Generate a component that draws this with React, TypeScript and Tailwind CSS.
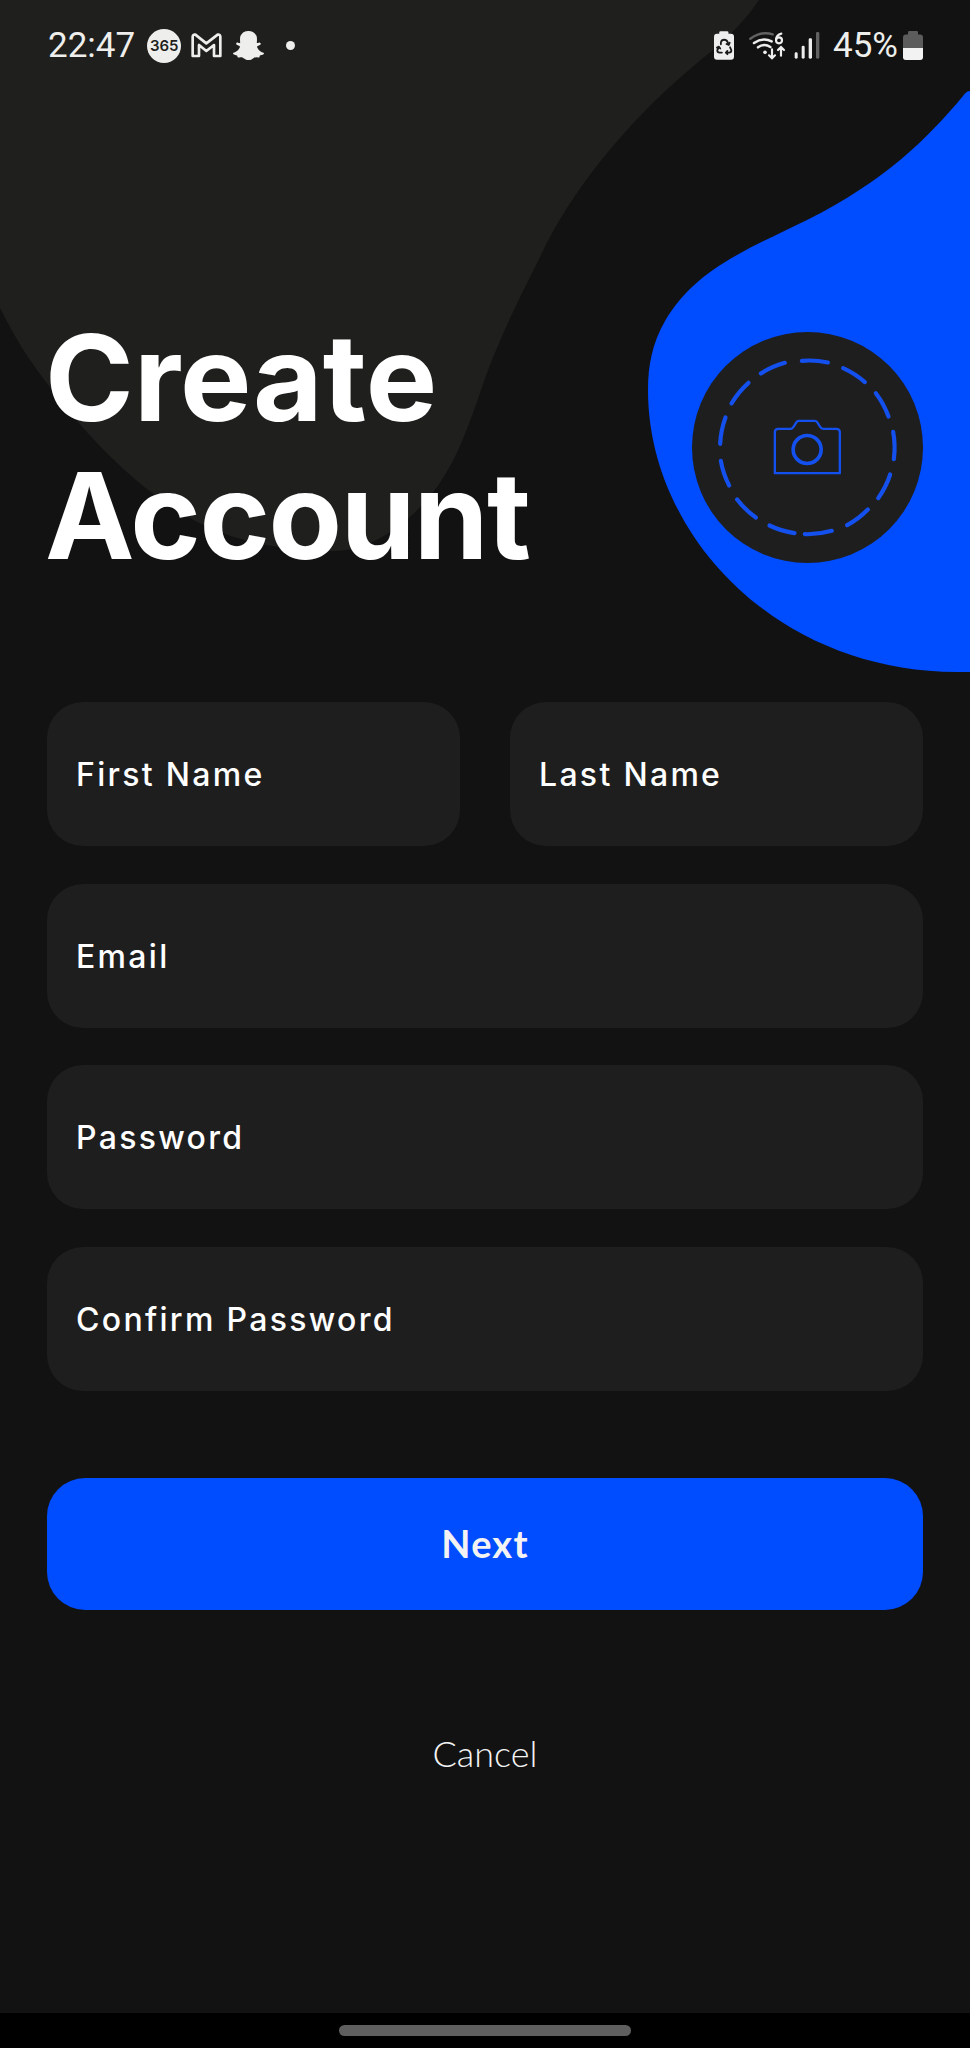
import React from "react";
import { FaSnapchatGhost } from "react-icons/fa";

function Backdrop() {
  return (
    <svg className="absolute inset-0 h-[700px] w-[970px]" viewBox="0 0 970 700" aria-hidden="true">
      <path
        d="M0 0H759C747 18 730 36 713 50C683 74 654 100 627 130C589 172 560 214 540 257C519 299 502 333 487 373C473 412 461 454 437 487C414 519 374 551 334 551C285 551 232 542 190 518C125 481 73 421 30 360C19 344 9 326 0 308Z"
        fill="#1f1f1d"
      />
      <path
        d="M970 91C967 91 965 93 963 96C928 138 885 181 807 220C783 232 760 242 737 255C703 274 681 294 665 321C652 344 648 366 648 390C648 535 777 672 957 672H970Z"
        fill="#004cff"
      />
    </svg>
  );
}

function GmailIcon() {
  return (
    <svg className="ml-[10px] h-[25px] w-[31px]" viewBox="482 56 93 75" fill="none" stroke="#eeeeec" strokeWidth="8" strokeLinejoin="round">
      <path d="M487 125V67Q487 60 495 61L528 87L562 61Q570 60 570 67V125H551V92L528 110L506 92V125Z" />
    </svg>
  );
}

function BatterySaver() {
  return (
    <svg className="h-[29px] w-[20px]" viewBox="704 94 61 87">
      <rect x="720" y="94" width="28" height="20" rx="4" fill="#eeeeee" />
      <rect x="704" y="102" width="61" height="79" rx="9" fill="#eeeeee" />
      <g fill="none" stroke="#1a1a1a" strokeWidth="5.5" strokeLinecap="round" strokeLinejoin="round">
        <path d="M725 134V128Q727 120 735 120Q743 120 746 128L749 135M742 133L749 136L752 129" />
        <path d="M719 142L714 152Q714 159 721 159H728M713 144L719 141L723 147" />
        <path d="M753 143L757 152Q757 159 750 159H742M745 154L740 159L745 164" />
      </g>
    </svg>
  );
}

function WifiIcon() {
  return (
    <svg className="ml-[15px] h-[29px] w-[37px]" viewBox="178 48 111 87" fill="none" strokeWidth="7.5" strokeLinecap="round">
      <path d="M182 71Q215 47 249 58" stroke="#626262" />
      <path d="M193 84Q219 66 246 79M205 97Q224 84 242 96" stroke="#eeeeee" />
      <circle cx="226" cy="112" r="5.5" fill="#eeeeee" />
      <path d="M247 103V129M238 121L247 130L256 121M274 122V97M265 105L274 96L283 105" stroke="#eeeeee" strokeWidth="6.5" />
      <path d="M275 56Q260 59 259 75" stroke="#eeeeee" strokeWidth="6.5" />
      <circle cx="268" cy="76" r="9" stroke="#eeeeee" strokeWidth="6.5" />
    </svg>
  );
}

function SignalIcon() {
  return (
    <svg className="ml-[8px] h-[27px] w-[26px]" viewBox="311 51 78 81">
      <rect x="313" y="112" width="9" height="19" rx="4" fill="#eeeeee" />
      <rect x="334" y="92" width="9" height="39" rx="4" fill="#eeeeee" />
      <rect x="355" y="70" width="10" height="61" rx="4" fill="#eeeeee" />
      <rect x="377" y="51" width="10" height="80" rx="4" fill="#626262" />
    </svg>
  );
}

function BatteryIcon() {
  return (
    <svg className="ml-[5px] h-[29px] w-[20px]" viewBox="0 0 20 29">
      <rect x="5" y="0" width="10" height="6" rx="1.2" fill="#5c5c5c" />
      <rect x="0" y="3.5" width="20" height="25.5" rx="3" fill="#5c5c5c" />
      <path d="M0 17H20V26Q20 29 17 29H3Q0 29 0 26Z" fill="#f2f2f2" />
    </svg>
  );
}

function StatusBar() {
  return (
    <header className="relative flex h-[91px] items-center justify-between pr-[47px] pl-[48px] font-['Roboto',sans-serif] text-[35px] leading-none text-[#eeeeec]">
      <div className="flex items-center">
        <span>22:47</span>
        <span className="ml-[12px] flex size-[34px] items-center justify-center rounded-full bg-[#eeeeec] font-['Inter',sans-serif] text-[15px] font-semibold text-[#1f1f1d]">365</span>
        <GmailIcon />
        <FaSnapchatGhost className="ml-[11px] size-[31px]" />
        <span className="ml-[22px] size-[9px] rounded-full bg-[#eeeeec]" />
      </div>
      <div className="flex items-center">
        <BatterySaver />
        <WifiIcon />
        <SignalIcon />
        <span className="ml-[13px]">45%</span>
        <BatteryIcon />
      </div>
    </header>
  );
}

const dashes = [
  "M486 213A260 260 0 0 1 564 218",
  "M610 235A260 260 0 0 1 675 277",
  "M708 310A260 260 0 0 1 746 380",
  "M760 426A260 260 0 0 1 762 508",
  "M751 554A260 260 0 0 1 715 625",
  "M684 659A260 260 0 0 1 622 706",
  "M576 723A260 260 0 0 1 495 733",
  "M464 730A260 260 0 0 1 389 707",
  "M348 683A260 260 0 0 1 292 629",
  "M268 587A260 260 0 0 1 243 513",
  "M241 462A260 260 0 0 1 257 383",
  "M275 341A260 260 0 0 1 326 279",
  "M363 251A260 260 0 0 1 435 219",
];

function PhotoPicker() {
  return (
    <button aria-label="Add photo" className="mt-[241px] size-[231px] shrink-0 rounded-full bg-[#1e1e1e]">
      <svg className="size-[231px]" viewBox="156.5 126.5 693 693" fill="none" stroke="#1450ee" strokeLinejoin="round">
        {dashes.map((d) => (
          <path key={d} d={d} strokeWidth="12.5" strokeLinecap="round" />
        ))}
        <path d="M405 427Q405 417 415 417H453Q458 417 461 411L470 397Q472 393 477 393H525Q530 393 532 397L541 411Q544 417 550 417H589Q600 417 600 427V550H405Z" strokeWidth="7" />
        <circle cx="502" cy="479" r="42" strokeWidth="11" />
      </svg>
    </button>
  );
}

function Field({ label }: { label: string }) {
  return (
    <label className="flex h-[144px] flex-1 items-center rounded-[36px] bg-[#1e1e1e] pt-[2px] pl-[29px] font-['Inter',sans-serif] text-[32px] font-medium tracking-[2.3px] text-white">
      <span>{label}</span>
    </label>
  );
}

export default function App() {
  return (
    <div className="relative flex h-[2048px] w-[970px] flex-col overflow-hidden bg-[#121212]">
      <Backdrop />
      <StatusBar />
      <main className="relative flex flex-1 flex-col px-[47px]">
        <section className="flex h-[611px] justify-between">
          <h1 className="mt-[218px] -ml-[2px] font-['Inter',sans-serif] text-[120px] leading-[137.5px] font-[650] text-white">
            <span className="block tracking-[0.2px]">Create</span>
            <span className="block tracking-[-1.5px]">Account</span>
          </h1>
          <PhotoPicker />
        </section>
        <form className="flex flex-col gap-[37.5px]">
          <div className="flex gap-[50px]">
            <Field label="First Name" />
            <Field label="Last Name" />
          </div>
          <div className="flex">
            <Field label="Email" />
          </div>
          <div className="flex">
            <Field label="Password" />
          </div>
          <div className="flex">
            <Field label="Confirm Password" />
          </div>
        </form>
        <button className="mt-[87px] h-[132px] rounded-[38px] bg-[#004cff] font-['Lato',sans-serif] text-[38px] font-bold tracking-[1.2px] text-[#f3f3f3]">
          Next
        </button>
        <button className="mt-[115px] self-center font-['Lato',sans-serif] text-[36px] leading-[56px] font-light text-[#f4f4f4]">
          Cancel
        </button>
      </main>
      <footer className="relative flex h-[35px] items-center justify-center bg-black">
        <div className="h-[11px] w-[292px] rounded-full bg-[#5f5f5f]" />
      </footer>
    </div>
  );
}
